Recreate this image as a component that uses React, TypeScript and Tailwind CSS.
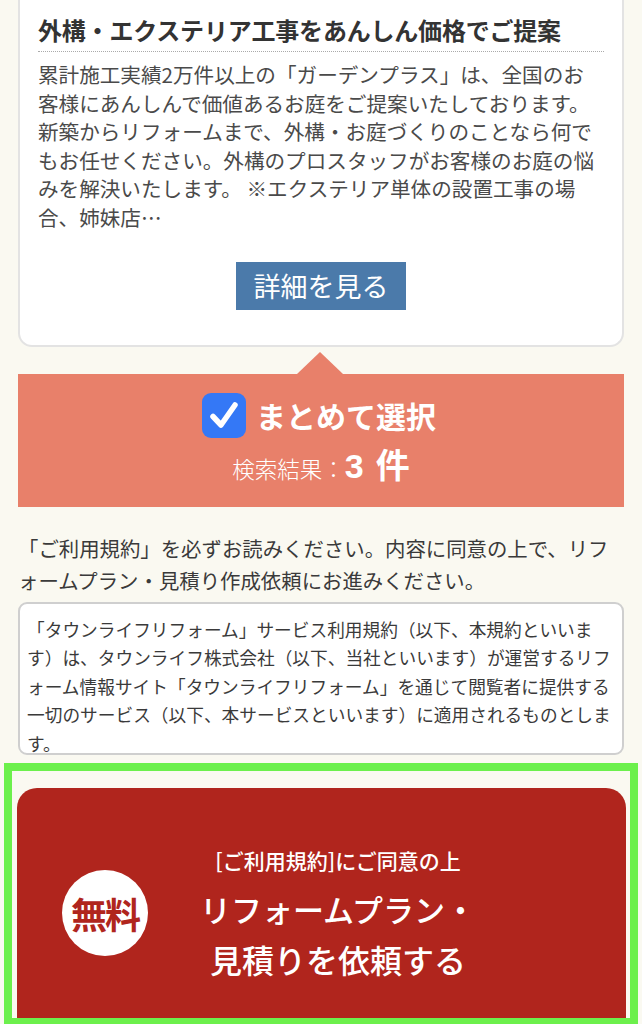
const jp = "font-['Noto_Sans_CJK_JP','Noto_Sans',sans-serif]";

const CheckIcon = () => (
  <svg width="44" height="45" viewBox="0 0 44 45" className="shrink-0">
    <rect x="0" y="0" width="44" height="45" rx="9" fill="#3478f6" />
    <path d="M11 23.5 L19 32 L33 12" fill="none" stroke="#fff" strokeWidth="5.5" strokeLinecap="round" strokeLinejoin="round" />
  </svg>
);

export default function App() {
  return (
    <div className={`${jp} bg-[#faf9f1] w-full h-[1024px] overflow-hidden`}>
      {/* plan card, top is scrolled out of view */}
      <div className="mx-[18px] bg-white border-2 border-t-0 border-[#e3e3e3] rounded-b-[14px] px-[18px] pt-[14px] pb-[35px]">
        <h2 className="text-[24px] leading-[32px] font-bold text-[#333] pb-[5px] border-b border-dotted border-[#aaa] tracking-[-0.2px]">
          外構・エクステリア工事をあんしん価格でご提案
        </h2>
        <p className="mt-[8px] text-[20.6px] leading-[28.6px] text-[#4a4a4a]">
          累計施工実績2万件以上の「ガーデンプラス」は、全国のお客様にあんしんで価値あるお庭をご提案いたしております。新築からリフォームまで、外構・お庭づくりのことなら何でもお任せください。外構のプロスタッフがお客様のお庭の悩みを解決いたします。 ※エクステリア単体の設置工事の場合、姉妹店…
        </p>
        <div className="mt-[30px] flex justify-center">
          <button className="h-[48px] w-[170px] bg-[#4b7aaa] text-white text-[27px] leading-none">
            詳細を見る
          </button>
        </div>
      </div>

      {/* bulk select banner */}
      <div className="relative mt-[27px] mx-[18px]">
        <div className="absolute left-[279px] -top-[22px] w-0 h-0 border-l-[23px] border-r-[23px] border-b-[22px] border-l-transparent border-r-transparent border-b-[#e8806a]" />
        <div className="h-[133px] bg-[#e8806a] flex flex-col items-center pt-[19px]">
          <div className="flex items-center gap-[10px] pr-[4px]">
            <CheckIcon />
            <span className="text-white text-[30px] leading-[44px] font-bold">まとめて選択</span>
          </div>
          <div className="mt-[4px] flex items-baseline text-white">
            <span className="text-[22.5px] leading-none font-light">検索結果：</span>
            <span className="text-[34px] leading-[44px] font-bold font-['Liberation_Sans','Noto_Sans_CJK_JP',sans-serif]">3</span>
            <span className="text-[34px] leading-[44px] font-bold ml-[12px]">件</span>
          </div>
        </div>
      </div>

      {/* terms */}
      <p className="mt-[25px] px-[18px] text-[20.4px] leading-[32px] text-[#3a3a3a]">
        「ご利用規約」を必ずお読みください。内容に同意の上で、リフォームプラン・見積り作成依頼にお進みください。
      </p>
      <div className="mt-[6px] mx-[18px] h-[153px] overflow-hidden bg-white border-2 border-[#cfcfcf] rounded-[9px] px-[7px] pt-[11px]">
        <p className="text-[17.7px] leading-[28.6px] text-[#3a3a3a]">
          「タウンライフリフォーム」サービス利用規約（以下、本規約といいます）は、タウンライフ株式会社（以下、当社といいます）が運営するリフォーム情報サイト「タウンライフリフォーム」を通じて閲覧者に提供する一切のサービス（以下、本サービスといいます）に適用されるものとします。
        </p>
      </div>

      {/* CTA */}
      <div className="mt-[8px] mx-[4px] border-[8px] border-[#6cf04c] pt-[17px] pl-[5px] pr-[4px] bg-[#faf9f1]">
        <div className="h-[230px] bg-[#b0251d] rounded-t-[20px] flex items-center pt-[20px]">
          <div className="ml-[45px] w-[86px] h-[86px] rounded-full bg-white flex items-center justify-center shrink-0">
            <span className="text-[#b0251d] text-[36px] font-bold leading-none tracking-[-2px]">無料</span>
          </div>
          <div className="ml-[40px] w-[300px] flex flex-col items-center text-white">
            <span className="text-[21px] leading-[30px] font-medium">[ご利用規約]にご同意の上</span>
            <span className="mt-[12px] text-[31px] leading-[44px] font-medium">リフォームプラン・</span>
            <span className="mt-[6px] text-[32px] leading-[44px] font-medium">見積りを依頼する</span>
          </div>
        </div>
      </div>
    </div>
  );
}
